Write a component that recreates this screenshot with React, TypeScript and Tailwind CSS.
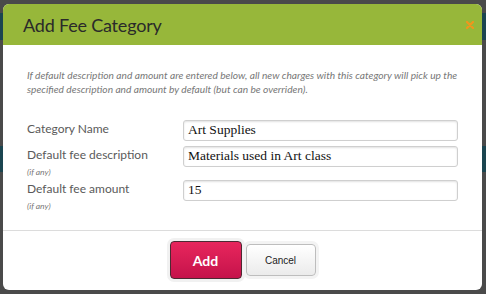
export default function App() {
  const sans = { fontFamily: "Lato, 'Open Sans', sans-serif" };

  return (
    <div className="relative h-[294px] w-[486px] overflow-hidden bg-[#4a4a4a]" style={sans}>
      {/* page behind the overlay */}
      <div className="flex h-full flex-col">
        <div className="h-[13px]" />
        <div className="h-[27px] bg-[#1b4550]" />
        <div className="h-[106px]" />
        <div className="h-[26px] bg-[#1b4550]" />
      </div>

      {/* Modal */}
      <div className="absolute left-[3px] top-[4px] flex h-[286px] w-[479px] flex-col overflow-hidden rounded-[6px] bg-white">
        <div className="flex h-[41px] items-center justify-between bg-[#97b73a] pl-[20px] pr-[8px]">
          <h2 className="text-[18px] leading-none tracking-[-0.2px] text-[#2a2a2a]">Add Fee Category</h2>
          <svg width="8" height="8" viewBox="0 0 8 8" className="mt-[1px]">
            <path d="M1 1L7 7M7 1L1 7" stroke="#f0961c" strokeWidth="2.2" strokeLinecap="round" />
          </svg>
        </div>

        <div className="flex-1 px-[24px] pt-[23px]">
          <p className="text-[10.2px] italic leading-[14px] text-[#777]">
            If default description and amount are entered below, all new charges with this category will pick up the
            specified description and amount by default (but can be overriden).
          </p>

          <div className="mt-[24px] flex flex-col">
            <div className="flex h-[26px] items-start">
              <label className="w-[156px] text-[12px] leading-[18px] text-[#5a5a5a]">Category Name</label>
              <Field value="Art Supplies" />
            </div>
            <div className="flex h-[34px] items-start">
              <div className="w-[156px]">
                <div className="text-[12px] leading-[18px] text-[#5a5a5a]">Default fee description</div>
                <div className="text-[8.5px] italic leading-[16px] text-[#777]">(if any)</div>
              </div>
              <Field value="Materials used in Art class" />
            </div>
            <div className="flex h-[34px] items-start">
              <div className="w-[156px]">
                <div className="text-[12px] leading-[18px] text-[#5a5a5a]">Default fee amount</div>
                <div className="text-[8.5px] italic leading-[16px] text-[#777]">(if any)</div>
              </div>
              <Field value="15" />
            </div>
          </div>
        </div>

        <div className="flex h-[60px] items-center justify-center gap-[4px] border-t border-[#dcdcdc] pb-[1px]">
          <button className="flex h-[38px] w-[72px] items-center justify-center rounded-[4px] border border-[#4d2a33] bg-gradient-to-b from-[#e8265d] to-[#c5124b] text-[14px] font-bold text-white shadow-[0_0_0_3px_#f1f1f1]">
            Add
          </button>
          <button
            className="flex h-[32px] w-[70px] items-center justify-center rounded-[4px] border border-[#bdbdbd] bg-gradient-to-b from-white to-[#ebebeb] text-[10px] text-[#222] shadow-[0_0_0_3px_#f3f3f3]"
            style={{ fontFamily: "'Liberation Sans', Arial, sans-serif" }}
          >
            Cancel
          </button>
        </div>
      </div>
    </div>
  );
}

function Field({ value }: { value: string }) {
  return (
    <div
      className="flex h-[21px] w-[275px] items-center rounded-[3px] border border-[#cfcfcf] px-[4px] text-[13.5px] text-[#111] shadow-[inset_0_1px_2px_rgba(0,0,0,0.12)]"
      style={{ fontFamily: "'Liberation Serif', 'Times New Roman', serif" }}
    >
      {value}
    </div>
  );
}
